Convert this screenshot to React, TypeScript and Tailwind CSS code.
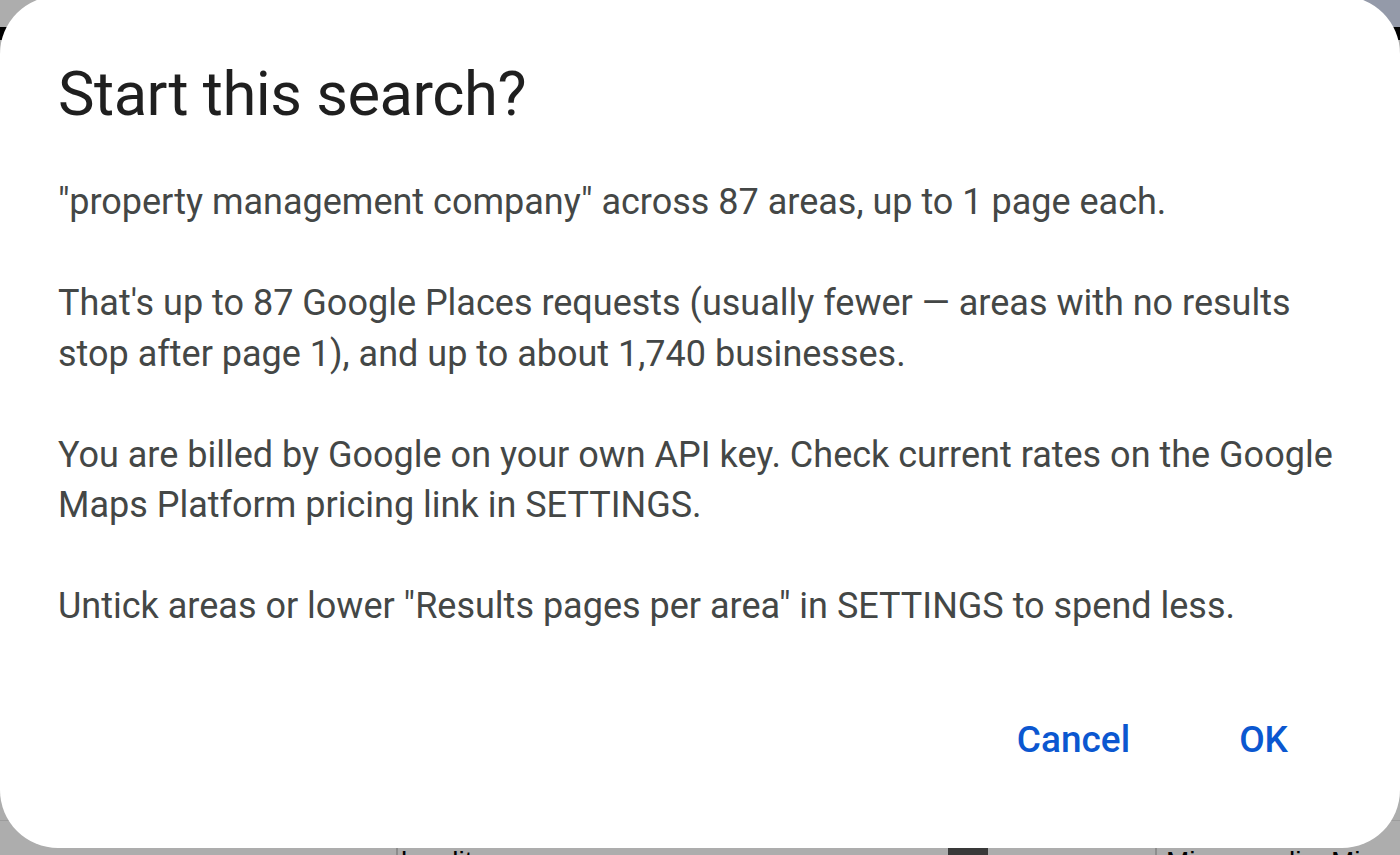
import React from "react";

const paragraphs = [
  ['"property management company" across 87 areas, up to 1 page each.'],
  [
    "That's up to 87 Google Places requests (usually fewer \u2014 areas with no results",
    "stop after page 1), and up to about 1,740 businesses.",
  ],
  [
    "You are billed by Google on your own API key. Check current rates on the Google",
    "Maps Platform pricing link in SETTINGS.",
  ],
  ['Untick areas or lower "Results pages per area" in SETTINGS to spend less.'],
];

const Sheet = () => (
  <div className="flex flex-col h-full w-full bg-white">
    <div className="flex h-[27px]">
      <div className="w-[700px] bg-white" />
      <div className="flex-1 bg-[#dbe4fa]" />
    </div>
    <div className="h-[13px] bg-black" />
    <div className="flex-1" />
    <div className="h-[27px] border-t border-[#e6e6e6]" />
    <div
      className="flex h-[8px] overflow-visible text-[28px] leading-[30px] text-black"
      style={{ fontFamily: "'Liberation Sans', Arial, sans-serif" }}
    >
      <div className="w-[398px] border-r-2 border-[#cfcfcf]" />
      <div className="w-[550px] pl-[3px] overflow-hidden">locality</div>
      <div className="w-[40px] bg-[#555] overflow-hidden" />
      <div className="w-[169px] border-r-2 border-[#d0d0d0]" />
      <div className="flex-1 pl-[9px] overflow-hidden whitespace-nowrap">Minneapolis, Minnesota</div>
    </div>
  </div>
);

const App = () => {
  return (
    <div className="relative w-[1400px] h-[855px] overflow-hidden">
      <Sheet />
      <div className="absolute inset-0 bg-black/[0.32]" />

      <div
        className="absolute left-0 top-[-4px] w-[1400px] h-[852px] rounded-[58px] bg-white flex flex-col pl-[58px] pr-[60px]"
        style={{ fontFamily: "Roboto, 'Noto Sans', sans-serif" }}
      >
        <h1 className="mt-[62px] text-[61.5px] leading-[72px] text-[#1f1f1f] tracking-[-0.5px]">
          Start this search?
        </h1>

        <div className="mt-[47px] text-[36px] leading-[50.5px] text-[#444746] flex flex-col gap-[50.5px]">
          {paragraphs.map((lines, i) => (
            <p key={i}>
              {lines.map((l, j) => (
                <span key={j} className="block whitespace-nowrap">
                  {l}
                </span>
              ))}
            </p>
          ))}
        </div>

        <div className="mt-auto mb-[81px] flex justify-end items-center gap-[109px] pr-[52px] text-[37px] font-medium text-[#0b57d0]">
          <button>Cancel</button>
          <button>OK</button>
        </div>
      </div>
    </div>
  );
};

export default App;
